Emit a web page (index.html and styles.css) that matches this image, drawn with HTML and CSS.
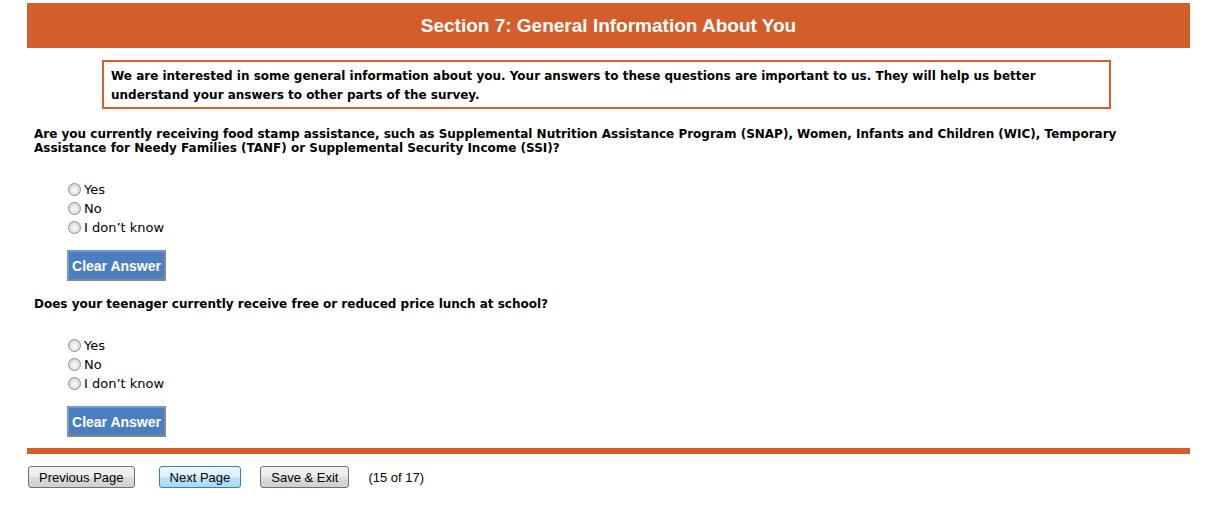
FILE: index.html
```html
<!DOCTYPE html>
<html lang="en">
  <head>
    <meta charset="UTF-8" />
    <meta name="viewport" content="width=device-width, initial-scale=1.0" />
    <title>Section 7: General Information About You</title>
    <link rel="stylesheet" href="styles.css">
  </head>
  <body>
    <div class="page">
      <div class="section-header">Section 7: General Information About You</div>
      <div class="intro">
        We are interested in some general information about you. Your answers to these questions are important to us. They will help us better understand your answers to other parts of the survey.
      </div>

      <div class="question">
        <div class="question-text">
          Are you currently receiving food stamp assistance, such as Supplemental Nutrition Assistance Program (SNAP), Women, Infants and Children (WIC), Temporary Assistance for Needy Families (TANF) or Supplemental Security Income (SSI)?
        </div>
        <div class="answers">
          <label class="answer"><input type="radio" name="q1" /> Yes</label>
          <label class="answer"><input type="radio" name="q1" /> No</label>
          <label class="answer"><input type="radio" name="q1" /> I don’t know</label>
        </div>
        <button class="clear-btn" onclick="clearAnswer('q1')">Clear Answer</button>
      </div>

      <div class="question">
        <div class="question-text">
          Does your teenager currently receive free or reduced price lunch at school?
        </div>
        <div class="answers">
          <label class="answer"><input type="radio" name="q2" /> Yes</label>
          <label class="answer"><input type="radio" name="q2" /> No</label>
          <label class="answer"><input type="radio" name="q2" /> I don’t know</label>
        </div>
        <button class="clear-btn" onclick="clearAnswer('q2')">Clear Answer</button>
      </div>

      <div class="footer-bar"></div>
      <div class="nav">
        <button class="nav-btn nav-first">Previous Page</button>
        <button class="nav-btn nav-default">Next Page</button>
        <button class="nav-btn">Save &amp; Exit</button>
        <span class="page-count">(15 of 17)</span>
      </div>
    </div>
    <script>
      function clearAnswer(name) {
        document.querySelectorAll('input[name="' + name + '"]').forEach(function (input) {
          input.checked = false;
        });
      }
    </script>
  </body>
</html>
```

FILE: styles.css
```css
body {
  font-family: "DejaVu Sans", Verdana, sans-serif;
  margin: 0;
  padding: 0;
  background-color: #fff;
  color: #000;
}
.page {
  width: 1163px;
  margin-left: 27px;
  padding-top: 3px;
}
.section-header {
  background-color: #d35e2b;
  color: #fff;
  font-family: "Liberation Sans", Arial, sans-serif;
  font-weight: bold;
  font-size: 19px;
  height: 45px;
  line-height: 46px;
  text-align: center;
}
.intro {
  margin: 12px 0 18px 75px;
  width: 991px;
  height: 40px;
  border: 2px solid #d35e2b;
  padding: 5px 7px 0 7px;
  box-sizing: content-box;
  font-size: 12px;
  font-weight: bold;
  line-height: 19px;
}
.question {
  padding-left: 7px;
}
.question-text {
  font-size: 12px;
  font-weight: bold;
  line-height: 14px;
  margin-top: 14px;
}
.answers {
  margin: 25px 0 0 34px;
}
.answer {
  display: flex;
  align-items: center;
  height: 19px;
  font-size: 13px;
}
.answer input {
  appearance: none;
  -webkit-appearance: none;
  margin: 0 3px 0 0;
  width: 13px;
  height: 13px;
  border: 1px solid #8e8f8f;
  border-radius: 50%;
  background: radial-gradient(circle at 50% 55%, #ffffff 0%, #e6e6e6 45%, #c4c4c4 100%);
}
.answer input:checked {
  background: radial-gradient(circle, #333 0, #333 3px, #e6e6e6 3.5px, #c4c4c4 100%);
}
.clear-btn {
  margin: 13px 0 2px 33px;
  width: 99px;
  height: 31px;
  background-color: #4a7ebf;
  color: #fff;
  font-family: "Liberation Sans", Arial, sans-serif;
  font-weight: bold;
  font-size: 14px;
  border: 2px solid;
  border-color: #6f9ad0 #888 #888 #6f9ad0;
  padding: 0;
  cursor: pointer;
}
.footer-bar {
  margin-top: 9px;
  height: 6px;
  background-color: #d35e2b;
}
.nav {
  display: flex;
  align-items: center;
  gap: 19px;
  margin-top: 12px;
  padding-left: 1px;
  font-family: "Liberation Sans", Arial, sans-serif;
  font-size: 13px;
}
.nav-btn {
  height: 22px;
  padding: 0 10px;
  font-family: "Liberation Sans", Arial, sans-serif;
  font-size: 13px;
  color: #000;
  border: 1px solid #707070;
  border-radius: 3px;
  background: linear-gradient(#f2f2f2, #ebebeb 50%, #dddddd 50%, #cfcfcf);
}
.nav-first {
  margin-right: 5px;
}
.nav-default {
  border-color: #3c7fb1;
  background: linear-gradient(#eaf6fd, #d9f0fc 50%, #bee6fd 50%, #a7d9f5);
}
```
